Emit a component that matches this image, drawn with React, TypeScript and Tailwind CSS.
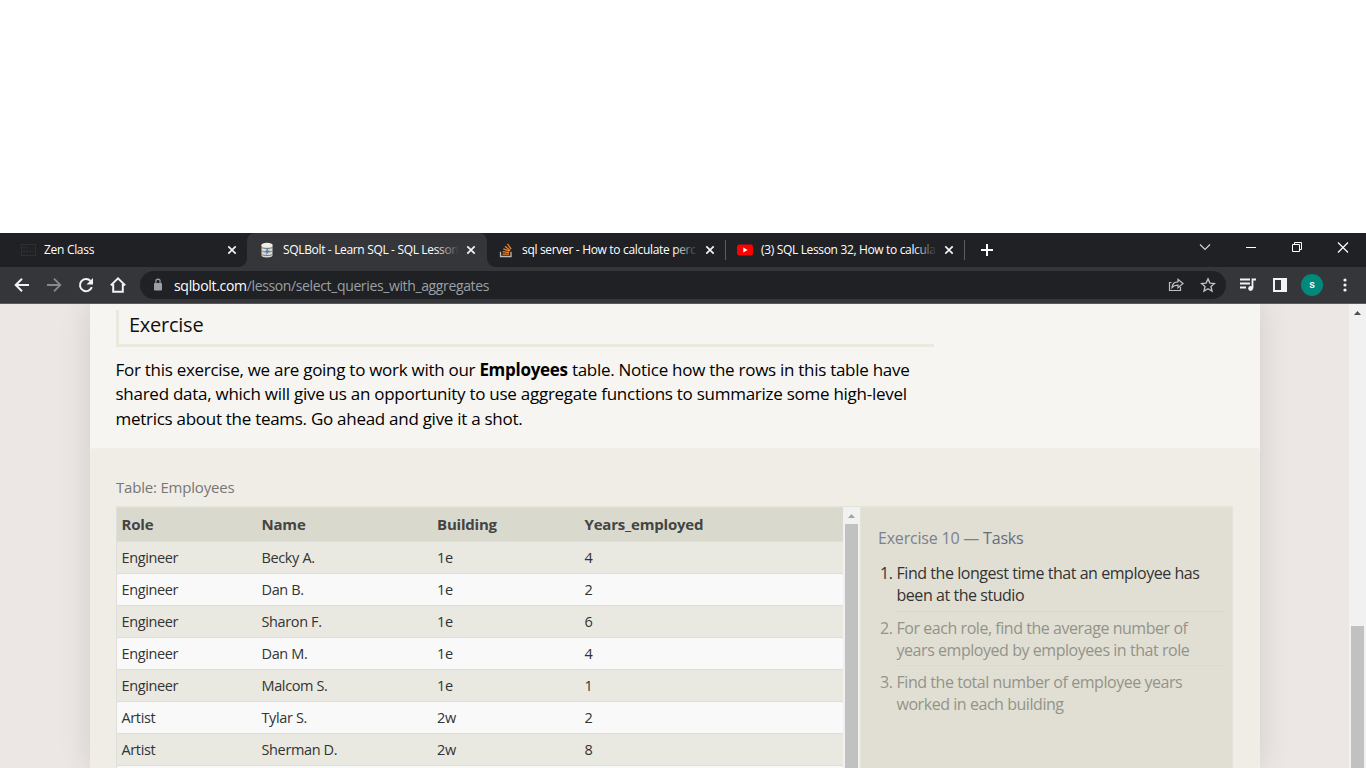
import React from "react";

const rows = [
  ["Engineer", "Becky A.", "1e", "4"],
  ["Engineer", "Dan B.", "1e", "2"],
  ["Engineer", "Sharon F.", "1e", "6"],
  ["Engineer", "Dan M.", "1e", "4"],
  ["Engineer", "Malcom S.", "1e", "1"],
  ["Artist", "Tylar S.", "2w", "2"],
  ["Artist", "Sherman D.", "2w", "8"],
];

function Close() {
  return (
    <svg className="h-4 w-4 shrink-0" viewBox="0 0 16 16" stroke="#f1f3f4" strokeWidth="1.7" fill="none">
      <path d="M4.3 4.3l7.4 7.4M11.7 4.3l-7.4 7.4" />
    </svg>
  );
}

function ZenIcon() {
  return (
    <svg className="h-4 w-4 shrink-0" viewBox="0 0 16 16" fill="none" stroke="#303032">
      <rect x="1.5" y="2.5" width="14" height="11" />
      <path d="M3 5.500h6M3 9.500h10" strokeDasharray="2 1" stroke="#2d2d2f" strokeWidth="2" />
    </svg>
  );
}

function DatabaseIcon() {
  return (
    <svg className="h-4 w-4 shrink-0" viewBox="0 0 16 16">
      <path d="M2.500 3v10.500c0 1 2.400 2 5.500 2s5.500-1 5.500-2V3z" fill="#dcdad4" />
      <ellipse cx="8" cy="3" rx="5.700" ry="2.200" fill="#f2efe8" />
      <path d="M2.500 5.300c1.500 1.600 9.500 1.600 11 0M2.500 8.800c1.500 1.600 9.500 1.600 11 0M2.500 12.300c1.500 1.600 9.500 1.600 11 0" fill="none" stroke="#77736d" strokeWidth="1" />
      <path d="M9.500 5.500L5.800 9.800h2l-1 3.500 4-4.700H8.500z" fill="#3c7fc4" />
    </svg>
  );
}

function StackIcon() {
  return (
    <svg className="h-4 w-4 shrink-0" viewBox="0 0 16 16" fill="none" strokeWidth="1.300">
      <path d="M1.500 9.800v4.700h10.500V9.800" stroke="#bcbbbb" />
      <path d="M3.500 12.100h6.500M3.600 9.600l6.400 1M4.300 6.900l6.100 2.300M6 4.300l5.100 4.100M8.500 1.800l3.700 5.300" stroke="#f48024" />
    </svg>
  );
}

function YoutubeIcon() {
  return (
    <svg className="h-4 w-4 shrink-0" viewBox="0 0 16 16">
      <rect x="0" y="2.500" width="16" height="11" rx="2.500" fill="#f00" />
      <path d="M6.300 5.600v4.800L10.600 8z" fill="#fff" />
    </svg>
  );
}

function TabTitle({ children, fade }: { children: React.ReactNode; fade: string }) {
  return (
    <span className="relative h-5 flex-1 whitespace-nowrap leading-5">
      {children}
      <span className={"absolute inset-y-0 right-0 w-6 bg-linear-to-r from-transparent " + fade} />
    </span>
  );
}

function TabStrip() {
  return (
    <div className="flex h-[34px] bg-[#202124] text-[12px] text-white">
      <div className="flex w-[247px] items-center pr-[7px] pl-5">
        <ZenIcon />
        <span className="ml-2 flex-1 tracking-[-0.3px]">Zen Class</span>
        <Close />
      </div>
      <div className="relative flex w-[240px] items-center rounded-t-lg bg-[#35363a] pr-2 pl-3">
        <span className="absolute bottom-0 -left-2 h-2 w-2 bg-[radial-gradient(circle_at_0_0,#202124_7.500px,#35363a_8px)]" />
        <span className="absolute -right-2 bottom-0 h-2 w-2 bg-[radial-gradient(circle_at_100%_0,#202124_7.500px,#35363a_8px)]" />
        <DatabaseIcon />
        <span className="ml-2 flex min-w-0 flex-1 tracking-[-0.34px]"><TabTitle fade="to-[#35363a]">SQLBolt - Learn SQL - SQL Lesson</TabTitle></span>
        <span className="ml-1 flex"><Close /></span>
      </div>
      <div className="flex w-[239px] items-center pr-2 pl-3">
        <StackIcon />
        <span className="ml-[7px] flex min-w-0 flex-1 tracking-[-0.32px]"><TabTitle fade="to-[#202124]">sql server - How to calculate perc</TabTitle></span>
        <span className="ml-1 flex"><Close /></span>
      </div>
      <div className="flex w-[239px] items-center pr-2 pl-[11px]">
        <span className="-ml-[12px] mr-[11px] h-5 w-px bg-[#5b5d61]" />
        <YoutubeIcon />
        <span className="ml-2 flex min-w-0 flex-1 tracking-[-0.34px]"><TabTitle fade="to-[#202124]">(3) SQL Lesson 32, How to calcula</TabTitle></span>
        <span className="ml-1 flex"><Close /></span>
      </div>
      <div className="flex items-center">
        <span className="-ml-px h-5 w-px bg-[#5b5d61]" />
        <svg className="ml-[14px] h-4 w-4" viewBox="0 0 16 16" stroke="#fff" strokeWidth="2"><path d="M2 8h12M8 2v12" /></svg>
      </div>
      <div className="ml-auto flex items-start pt-[6px]">
        <svg className="h-4 w-[46px]" viewBox="0 0 46 16" fill="none" stroke="#d0d1d2" strokeWidth="1.200"><path d="M18 5.500l5 5 5-5" /></svg>
        <svg className="h-4 w-[46px]" viewBox="0 0 46 16" fill="none" stroke="#fff"><path d="M18 8.500h10" /></svg>
        <svg className="h-4 w-[46px]" viewBox="0 0 46 16" fill="none" stroke="#fff"><path d="M18.500 5.500h7v7h-7zM20.500 5.500v-2h7v7h-2" /></svg>
        <svg className="h-4 w-[46px]" viewBox="0 0 46 16" fill="none" stroke="#fff" strokeWidth="1.200"><path d="M18 3.500l10 10M28 3.500l-10 10" /></svg>
      </div>
    </div>
  );
}

function Toolbar() {
  return (
    <div className="flex h-[37px] items-center border-b border-[#5a5a5d] bg-[#35363a]">
      <svg className="ml-[14px] h-4 w-4" viewBox="0 0 16 16" fill="none" stroke="#f1f3f4" strokeWidth="2"><path d="M15 8H2.500M8 1.700L1.700 8 8 14.300" /></svg>
      <svg className="ml-4 h-4 w-4" viewBox="0 0 16 16" fill="none" stroke="#87898c" strokeWidth="1.800"><path d="M1 8h12.500M8 1.700L14.300 8 8 14.300" /></svg>
      <svg className="ml-4 h-4 w-4" viewBox="0 0 16 16" fill="none" stroke="#f1f3f4" strokeWidth="2"><path d="M13.800 10.200A6.100 6.100 0 1 1 12.500 3.900" /><path d="M15 1v6.500H8.500z" fill="#f1f3f4" stroke="none" /></svg>
      <svg className="ml-4 h-[18px] w-4" viewBox="0 0 16 18" fill="none" stroke="#f1f3f4" strokeWidth="2"><path d="M0.800 9.400L8 2.300l7.200 7.100M3.200 8v7.800h9.600V8" /></svg>
      <div className="ml-[14px] flex h-7 w-[1086px] items-center rounded-full bg-[#202124] pr-[10px] pl-3">
        <svg className="h-[14px] w-3" viewBox="0 0 12 14"><rect x="2" y="5" width="8" height="7.500" rx=".8" fill="#9aa0a6" /><path d="M3.900 5V3.300a2.100 2.100 0 0 1 4.200 0V5" fill="none" stroke="#9aa0a6" strokeWidth="1.200" /></svg>
        <span className="ml-[10px] text-[14px] tracking-[-0.37px] text-[#9aa0a6]"><span className="tracking-[-0.3px] text-white">sqlbolt.com</span>/lesson/select_queries_with_aggregates</span>
        <svg className="ml-auto h-4 w-4" viewBox="0 0 16 16" fill="none" stroke="#bdc1c6" strokeWidth="1.200"><path d="M3.500 5.500h-2v8h11V10" /><path d="M4 10.500c.3-3.600 2.300-5.500 6-5.600V2.300L15 6.500l-5 4.200V8.100c-2.700-.1-4.500.6-6 2.400z" /></svg>
        <svg className="ml-4 h-4 w-4" viewBox="0 0 16 16" fill="none" stroke="#bdc1c6" strokeWidth="1.400"><path d="M8 1.900l1.900 4.200 4.600.4-3.500 3.100 1 4.500L8 11.700l-4 2.400 1-4.500-3.500-3.100 4.600-.4z" /></svg>
      </div>
      <svg className="ml-[14px] h-4 w-4" viewBox="0 0 16 16" fill="none" stroke="#f1f3f4" strokeWidth="1.800"><path d="M0 2.500h10M0 6.500h10M0 10.500h6M12.500 11.500v-9H16" /><circle cx="10.600" cy="11.500" r="2.400" fill="#f1f3f4" stroke="none" /></svg>
      <svg className="ml-[17px] h-[14px] w-[14px]" viewBox="0 0 14 14"><path d="M0 0h14v14H0zM2 2v10h6V2z" fillRule="evenodd" fill="#f1f3f4" /></svg>
      <span className="ml-[14px] flex h-[22px] w-[22px] items-center justify-center rounded-full bg-[#00897b] font-['Roboto',sans-serif] text-[11px] font-medium text-white">s</span>
      <svg className="ml-[14px] h-4 w-4" viewBox="0 0 16 16" fill="#f1f3f4"><circle cx="8" cy="3" r="1.600" /><circle cx="8" cy="8" r="1.600" /><circle cx="8" cy="13" r="1.600" /></svg>
    </div>
  );
}

function EmployeesTable() {
  return (
    <div className="flex w-[744px] border-t border-[#e4e3d8]">
      <div className="w-[727px] border-t border-l border-[#dddfd8]">
        <div className="grid h-[34px] grid-cols-[140px_175.500px_147.500px_1fr] items-center border-b border-[#dfe0d6] bg-[#d9d9cd] pb-px pl-[4.500px] text-[15px] font-bold tracking-[-0.2px] text-[#444]">
          <span>Role</span><span>Name</span><span>Building</span><span>Years_employed</span>
        </div>
        {rows.map((row, i) => (
          <div key={i} className="grid h-8 grid-cols-[140px_175.500px_147.500px_1fr] items-center border-b border-[#ddd] pl-[4.500px] text-[14.500px] tracking-[-0.37px] text-[#333] odd:bg-[#f9f9f9] even:bg-[#e9e9e1]">
            {row.map((cell, j) => <span key={j}>{cell}</span>)}
          </div>
        ))}
        <div className="h-8 bg-[#f9f9f9]" />
      </div>
      <div className="flex w-[17px] flex-col items-center bg-[#f1f1f1]">
        <svg className="h-[17px] w-[17px] shrink-0" viewBox="0 0 17 17"><path d="M5 11h7L8.500 7z" fill="#a3a3a3" /></svg>
        <div className="w-[13px] flex-1 bg-[#c1c1c1]" />
      </div>
    </div>
  );
}

function Tasks() {
  return (
    <div className="w-[373px] border-2 border-r border-l border-[#e4e3d8] bg-[#e1dfd3] pl-[17px] pr-[7px]">
      <h3 className="mt-[18px] text-[16px] leading-6 tracking-[-0.2px] text-[#7b818d]">Exercise 10 — <span className="text-[#666c7c]">Tasks</span></h3>
      <ol className="mt-[10px] text-[16px] leading-[22px] tracking-[-0.45px] text-[#93938b]">
        <li className="flex h-[52px] pt-[2px] text-[#333]"><span className="w-[18.500px] shrink-0 pl-[2px]">1.</span><span className="flex-1 border-b border-[#d6d5c9]">Find the longest time that an employee has<br />been at the studio</span></li>
        <li className="flex h-[54px] pt-[5px]"><span className="w-[18.500px] shrink-0 pl-[2px]">2.</span><span className="flex-1 border-b border-[#dbdacf]">For each role, find the average number of<br />years employed by employees in that role</span></li>
        <li className="flex h-[54px] pt-[5px]"><span className="w-[18.500px] shrink-0 pl-[2px]">3.</span><span className="flex-1">Find the total number of employee years<br />worked in each building</span></li>
      </ol>
    </div>
  );
}

export default function App() {
  return (
    <div className="flex h-[768px] w-[1366px] flex-col overflow-hidden bg-white pt-[233px] font-['Open_Sans','Noto_Sans',sans-serif]">
      <TabStrip />
      <Toolbar />
      <div className="flex h-[464px] overflow-hidden bg-[#ece7e4]">
        <main className="ml-[90px] h-[464px] w-[1170px] bg-[#f6f5f1] pt-[6px] shadow-[0_0_30px_rgba(0,0,0,0.12)]">
          <h2 className="ml-[26px] h-[37px] w-[818px] border-b-[3px] border-l-[3px] border-[#e9e9dd] pl-[10px] text-[20px] leading-[30px] tracking-[-0.25px] text-[#111]">Exercise</h2>
          <p className="ml-[25.500px] h-[101px] whitespace-nowrap pt-[10.700px] text-[17px] leading-[24.500px] tracking-[-0.28px] text-black">
            For this exercise, we are going to work with our <b>Employees</b> table. Notice how the rows in this table have<br />
            <span className="tracking-[-0.265px]">shared data, which will give us an opportunity to use aggregate functions to summarize some high-level</span><br />
            metrics about the teams. Go ahead and give it a shot.
          </p>
          <section className="h-[320px] overflow-hidden rounded-t bg-[#efede5] pl-[26px]">
            <div className="h-[58px] pt-[27px] text-[15px] leading-6 tracking-[-0.2px] text-[#777]">Table: Employees</div>
            <div className="flex"><EmployeesTable /><Tasks /></div>
          </section>
        </main>
        <div className="ml-auto flex w-[17px] flex-col items-center bg-[#f1f1f1]">
          <svg className="h-[322px] w-[17px] shrink-0" viewBox="0 0 17 322"><path d="M5 11h7L8.500 7z" fill="#505050" /></svg>
          <div className="w-[13px] flex-1 bg-[#c1c1c1]" />
        </div>
      </div>
    </div>
  );
}
